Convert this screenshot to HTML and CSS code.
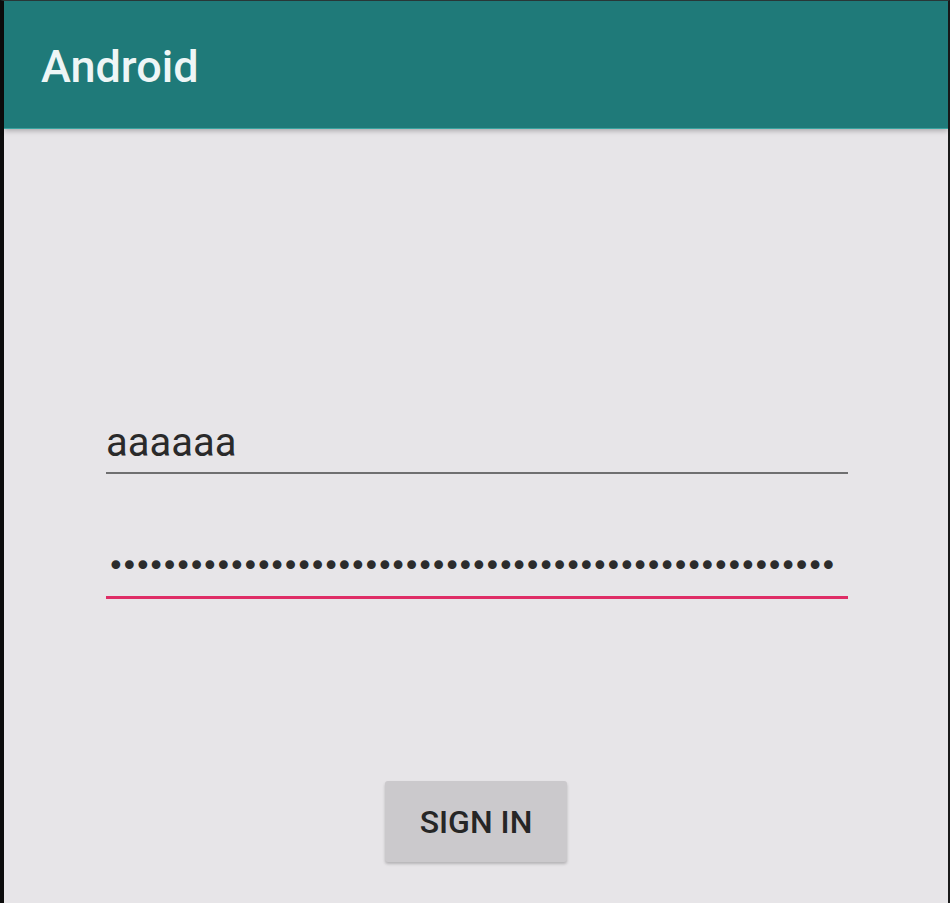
FILE: index.html
```html
<!DOCTYPE html>
<html>
<head>
<meta charset="utf-8">
<link rel="stylesheet" href="styles.css">
</head>
<body>
<div class="frame">
  <header class="appbar"><span class="title">Android</span></header>
  <main class="content">
    <div class="field username"><span class="value">aaaaaa</span></div>
    <div class="field password"><span class="dots">••••••••••••••••••••••••••••••••••••••••••••••••••••••</span></div>
    <div class="actions"><button class="btn">SIGN IN</button></div>
  </main>
</div>
</body>
</html>
```
FILE: styles.css
```css
html, body { margin: 0; padding: 0; background: #111; }
body { width: 950px; height: 903px; overflow: hidden; }
.frame {
  box-sizing: border-box;
  width: 950px;
  height: 903px;
  border-left: 4px solid #0c0c0c;
  border-right: 2px solid #1a1a1a;
  border-top: 1px solid #2a3a3a;
  background: #e7e5e8;
  display: flex;
  flex-direction: column;
  font-family: Roboto, "Liberation Sans", sans-serif;
}
.appbar {
  position: relative;
  height: 128px;
  background: #1f7a79;
  border-bottom: 1px solid #3aa3a0;
  box-shadow: 0 2px 5px rgba(0,0,0,0.25);
  display: flex;
  align-items: center;
  padding-left: 37px;
  box-sizing: border-box;
  z-index: 1;
}
.title {
  color: #eef6f6;
  font-size: 45px;
  font-weight: 500;
  margin-top: 3px;
}
.content {
  flex: 1;
  padding: 0 100px 0 102px;
  display: flex;
  flex-direction: column;
}
.field {
  box-sizing: border-box;
  border-bottom: 2px solid #6f6f70;
  display: flex;
  align-items: flex-end;
}
.username { margin-top: 285px; height: 60px; padding-bottom: 6px; }
.value { color: #2a2a2a; font-size: 40px; line-height: 46px; }
.password {
  margin-top: 64px;
  height: 61px;
  border-bottom: 3px solid #df2d66;
  padding-bottom: 19px;
  padding-left: 1px;
}
.dots {
  color: #2c2c2c;
  font-size: 30px;
  letter-spacing: -4.25px;
  line-height: 20px;
  font-family: "DejaVu Sans", sans-serif;
  white-space: nowrap;
  position: relative;
  top: -1px;
}
.actions {
  margin-top: 182px;
  display: flex;
  justify-content: center;
  padding-right: 2px;
}
.btn {
  width: 182px;
  height: 81px;
  background: #cbc9cc;
  border: none;
  border-radius: 3px;
  box-shadow: 0 2px 3px rgba(0,0,0,0.22);
  font-family: Roboto, "Liberation Sans", sans-serif;
  font-size: 32px;
  font-weight: 500;
  color: #262626;
  padding: 0;
}
```
